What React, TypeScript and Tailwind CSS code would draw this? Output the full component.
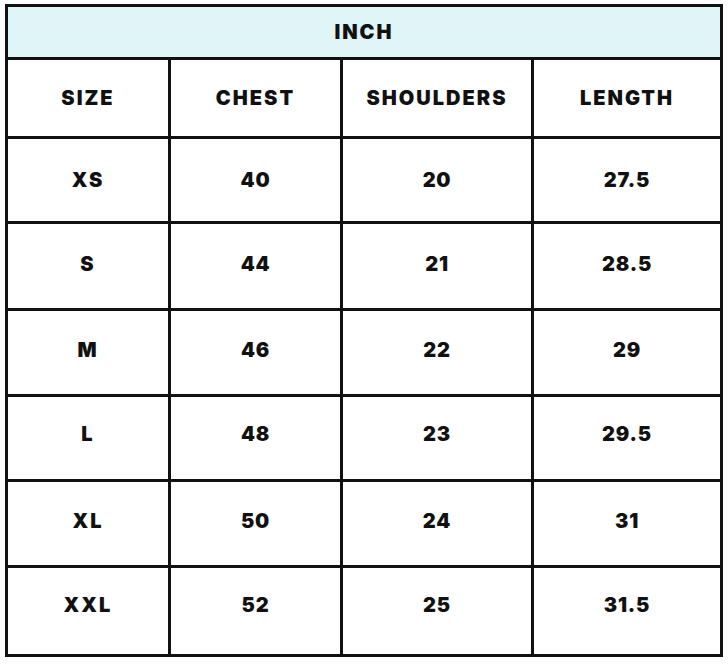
const rows = [
  ['XS', '40', '20', '27.5'],
  ['S', '44', '21', '28.5'],
  ['M', '46', '22', '29'],
  ['L', '48', '23', '29.5'],
  ['XL', '50', '24', '31'],
  ['XXL', '52', '25', '31.5'],
];

// row height + bottom padding to nudge the text like the source image
const rowStyles = [
  'h-[82px] pb-[0px]',
  'h-[84px] pb-[4px]',
  'h-[83px] pb-[5px]',
  'h-[82px] pb-[8px]',
  'h-[83px] pb-[6px]',
  'h-[86px] pb-[12px]',
];

const cols = 'grid grid-cols-[160px_169px_188px_186px] gap-x-[3px]';

export default function App() {
  return (
    <div className="min-h-[665px] w-[728px] bg-white pl-[5px] pt-[4px]">
      <div
        className="flex w-[718px] flex-col gap-y-[3px] bg-[#111] p-[3px] font-black text-[20px] text-[#111]"
        style={{ fontFamily: 'Inter, "Liberation Sans", sans-serif' }}
      >
        <div className="flex h-[50px] items-center justify-center bg-[#e0f5f7] tracking-[0.1em]">INCH</div>
        <div className={cols}>
          {['SIZE', 'CHEST', 'SHOULDERS', 'LENGTH'].map((h) => (
            <div key={h} className="flex h-[76px] items-center justify-center bg-white tracking-[0.1em]">
              {h}
            </div>
          ))}
        </div>
        {rows.map((r, i) => (
          <div key={r[0]} className={cols}>
            {r.map((v, j) => (
              <div
                key={j}
                className={`flex ${rowStyles[i]} items-center justify-center bg-white ${j === 0 ? 'tracking-[0.1em]' : 'tracking-[0.04em]'}`}
              >
                {v}
              </div>
            ))}
          </div>
        ))}
      </div>
    </div>
  );
}
